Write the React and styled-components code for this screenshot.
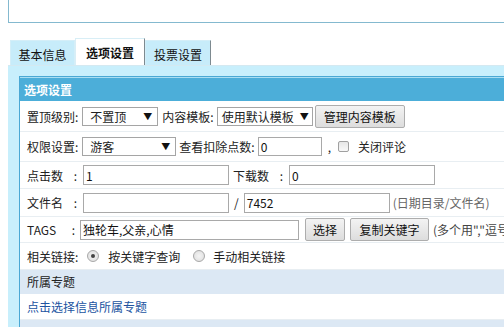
import React from "react";
import styled, { createGlobalStyle } from "styled-components";

const GlobalStyle = createGlobalStyle`
  html, body {
    margin: 0;
    padding: 0;
    overflow: hidden;
    background: #ffffff;
  }
  body {
    font-family: "Noto Sans CJK SC", "Microsoft YaHei", sans-serif;
    font-size: 12px;
    color: #222;
  }
`;

const Page = styled.div`
  width: 820px;
  padding-left: 8px;
`;

const TopBox = styled.div`
  height: 22px;
  border: 1px solid #84b9cf;
  border-top: none;
  background: #fff;
`;

const TabBar = styled.div`
  display: flex;
  align-items: flex-end;
  height: 27px;
  margin-top: 15px;
  padding-left: 2px;
`;

const Tab = styled.div`
  box-sizing: border-box;
  width: ${(p) => p.$w}px;
  height: ${(p) => (p.$active ? 27 : 25)}px;
  display: flex;
  align-items: center;
  justify-content: center;
  padding-top: ${(p) => (p.$active ? 0 : 2)}px;
  background: ${(p) => (p.$active ? "#ffffff" : "#c7ecfa")};
  border-top: 1px solid ${(p) => (p.$active ? "#d8eef6" : "#d4eef8")};
  border-left: 1px solid ${(p) => (p.$active ? "#d8eef6" : "#d4eef8")};
  border-right: 1px solid ${(p) => (p.$dark ? "#7d8a90" : "#d4eef8")};
  font-weight: ${(p) => (p.$active ? "bold" : "normal")};
  color: #111;
`;

const Panel = styled.div`
  background: #c8effc;
  border-top: 1px solid #d4e9f1;
  padding: 10px 0 0 11px;
`;

const Table = styled.div`
  width: 800px;
  background: #fff;
  border: 1px solid #4aa8d4;
  border-bottom: none;
`;

const Header = styled.div`
  height: 23px;
  border-top: 1px solid #a9def2;
  background: #4caed9;
  color: #fff;
  font-weight: bold;
  font-size: 12px;
  display: flex;
  align-items: center;
  padding-left: 4px;
`;

const Row = styled.div`
  box-sizing: border-box;
  height: ${(p) => p.$h}px;
  display: flex;
  align-items: center;
  padding-left: 7px;
  background: ${(p) => p.$bg || "#fff"};
  border-bottom: 1px solid ${(p) => (p.$bg ? p.$bg : "#e8eef2")};
  white-space: nowrap;
`;

const Text = styled.span`
  color: ${(p) => p.$color || "#222"};
  margin-left: ${(p) => p.$ml || 0}px;
  margin-right: ${(p) => p.$mr || 0}px;
`;

const FieldLabel = styled.span`
  display: inline-flex;
  justify-content: space-between;
  width: ${(p) => p.$w || 50}px;
  margin-right: ${(p) => p.$mr || 6}px;
  margin-left: ${(p) => p.$ml || 0}px;
`;

const Select = styled.div`
  box-sizing: border-box;
  width: ${(p) => p.$w}px;
  height: 19px;
  border: 1px solid #a5a5a5;
  background: #fff;
  display: inline-flex;
  align-items: center;
  justify-content: space-between;
  padding: 0 ${(p) => p.$pr || 5}px 0 ${(p) => p.$pl || 7}px;
  margin: 0 ${(p) => p.$mr || 4}px 0 ${(p) => p.$ml || 4}px;
  color: #222;
`;

const Arrow = styled.span`
  font-size: 9px;
  color: #111;
`;

const Input = styled.div`
  box-sizing: border-box;
  width: ${(p) => p.$w}px;
  height: ${(p) => p.$h || 20}px;
  border: 1px solid #a9a9a9;
  background: #fff;
  display: inline-flex;
  align-items: center;
  padding-left: 2px;
  margin-left: ${(p) => p.$ml || 0}px;
  margin-right: ${(p) => p.$mr || 0}px;
  font-size: 12px;
  color: #111;
`;

const Button = styled.div`
  box-sizing: border-box;
  height: ${(p) => p.$h || 23}px;
  width: ${(p) => p.$w}px;
  border: 1px solid #adadad;
  border-radius: 2px;
  background: linear-gradient(#f3f3f3, #dddddd);
  display: inline-flex;
  align-items: center;
  justify-content: center;
  margin-left: ${(p) => p.$ml || 0}px;
  margin-right: ${(p) => p.$mr || 0}px;
  color: #111;
`;

const Check = styled.span`
  box-sizing: border-box;
  display: inline-block;
  width: 11px;
  height: 11px;
  border: 1px solid #a0a0a0;
  border-radius: 2px;
  background: linear-gradient(#e6e6e6, #f8f8f8);
  margin-left: ${(p) => p.$ml || 0}px;
  margin-right: ${(p) => p.$mr || 0}px;
`;

const Radio = styled.span`
  box-sizing: border-box;
  display: inline-flex;
  align-items: center;
  justify-content: center;
  width: 12px;
  height: 12px;
  border: 1px solid #a8a8a8;
  border-radius: 50%;
  background: radial-gradient(circle, #f4f4f4, #dcdcdc);
  margin-left: ${(p) => p.$ml || 0}px;
  margin-right: ${(p) => p.$mr || 0}px;
  &::after {
    content: "";
    display: ${(p) => (p.$checked ? "block" : "none")};
    width: 4px;
    height: 4px;
    border-radius: 50%;
    background: #444;
  }
`;

export default function App() {
  return (
    <>
      <GlobalStyle />
      <Page>
        <TopBox />
        <TabBar>
          <Tab $w={65}>基本信息</Tab>
          <Tab $w={70} $active $dark>选项设置</Tab>
          <Tab $w={66} $dark>投票设置</Tab>
        </TabBar>
        <Panel>
          <Table>
            <Header>选项设置</Header>
            <Row $h={31}>
              <Text>置顶级别:</Text>
              <Select $w={76}>
                <span>不置顶</span>
                <Arrow>▼</Arrow>
              </Select>
              <Text>内容模板:</Text>
              <Select $w={96} $ml={3} $mr={2} $pl={4} $pr={3}>
                <span>使用默认模板</span>
                <Arrow>▼</Arrow>
              </Select>
              <Button $w={90}>管理内容模板</Button>
            </Row>
            <Row $h={30}>
              <Text>权限设置:</Text>
              <Select $w={94} $mr={3}>
                <span>游客</span>
                <Arrow>▼</Arrow>
              </Select>
              <Text>查看扣除点数:</Text>
              <Input $w={64} $h={19} $ml={3}>0</Input>
              <Text $ml={6}>,</Text>
              <Check $ml={7} $mr={9} />
              <Text>关闭评论</Text>
            </Row>
            <Row $h={27}>
              <FieldLabel>
                <span>点击数</span>
                <span>:</span>
              </FieldLabel>
              <Input $w={146}>1</Input>
              <FieldLabel $ml={4}>
                <span>下载数</span>
                <span>:</span>
              </FieldLabel>
              <Input $w={146}>0</Input>
            </Row>
            <Row $h={28}>
              <FieldLabel>
                <span>文件名</span>
                <span>:</span>
              </FieldLabel>
              <Input $w={146} />
              <Text $ml={5} $mr={5}>/</Text>
              <Input $w={146}>7452</Input>
              <Text $ml={3} $color="#666">(日期目录/文件名)</Text>
            </Row>
            <Row $h={26}>
              <FieldLabel $w={48} $mr={5}>
                <span>TAGS</span>
                <span>:</span>
              </FieldLabel>
              <Input $w={219}>独轮车,父亲,心情</Input>
              <Button $w={40} $ml={6}>选择</Button>
              <Button $w={79} $ml={5}>复制关键字</Button>
              <Text $ml={4} $color="#444">(多个用","逗号隔开)</Text>
            </Row>
            <Row $h={27}>
              <Text>相关链接:</Text>
              <Radio $checked $ml={9} $mr={9} />
              <Text>按关键字查询</Text>
              <Radio $ml={13} $mr={8} />
              <Text>手动相关链接</Text>
            </Row>
            <Row $h={24} $bg="#dce8f4">
              <Text>所属专题</Text>
            </Row>
            <Row $h={26}>
              <Text $color="#21539f">点击选择信息所属专题</Text>
            </Row>
            <Row $h={24} $bg="#dce8f4" />
          </Table>
        </Panel>
      </Page>
    </>
  );
}
